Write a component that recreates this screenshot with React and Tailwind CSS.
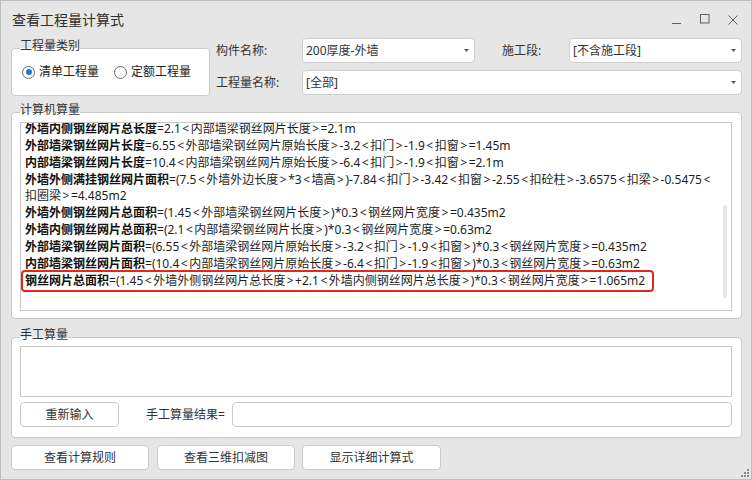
import React from "react";

const F = "font-['Noto_Sans','Noto_Sans_CJK_SC',sans-serif]";

function Legend({ children }) {
  return (
    <span className="absolute left-[8px] top-[-11px] leading-[16px] text-[12px] text-[#333] bg-[linear-gradient(to_bottom,#e6e6e6_10px,#ffffff_10px)] whitespace-nowrap">
      {children}
    </span>
  );
}

function Arrow() {
  return (
    <svg width="5" height="3" viewBox="0 0 5 3" className="shrink-0">
      <path d="M0 0H5L2.5 3Z" fill="#5a5a5a" />
    </svg>
  );
}

function Combo({ className, children }) {
  return (
    <div
      className={`h-[25px] bg-white border border-[#cdcdcd] rounded-[4px] flex items-center pl-[3px] pr-[5px] text-[12px] text-[#333] ${className}`}
    >
      <span className="flex-1 whitespace-nowrap">{children}</span>
      <Arrow />
    </div>
  );
}

function Radio({ checked, label }) {
  return (
    <div className="flex items-center gap-[4px]">
      <span className="w-[13px] h-[13px] rounded-full border border-[#6e6e6e] bg-white flex items-center justify-center">
        {checked && <span className="w-[6px] h-[6px] rounded-full bg-[#1f74e0]" />}
      </span>
      <span className="text-[12px] text-[#222] leading-[16px]">{label}</span>
    </div>
  );
}

function Btn({ className, children }) {
  return (
    <div
      className={`h-[25px] bg-white border border-[#cbcbcb] rounded-[4px] flex items-center justify-center text-[12px] text-[#333] ${className}`}
    >
      {children}
    </div>
  );
}

function T({ s }) {
  const parts = s.split(/([<>])/);
  return parts.map((p, i) =>
    p === "<" || p === ">" ? (
      <span key={i} className="px-[1.5px]">
        {p}
      </span>
    ) : (
      <React.Fragment key={i}>{p}</React.Fragment>
    )
  );
}

function L({ b, s }) {
  return (
    <div className="whitespace-nowrap">
      {b && <span className="font-bold text-[#111]">{b}</span>}
      <T s={s} />
    </div>
  );
}

export default function App() {
  return (
    <div
      className={`relative w-[752px] h-[480px] bg-[#e6e6e6] border border-[#bcbcbc] flex flex-col overflow-hidden ${F}`}
    >
      {/* title bar */}
      <div className="h-[37px] shrink-0 flex items-center pl-[11px] pr-[13px]">
        <span className="text-[14px] text-[#2f2f2f] leading-[18px]">查看工程量计算式</span>
        <div className="ml-auto flex items-center gap-[18px]">
          <svg width="10" height="10" viewBox="0 0 10 10">
            <path d="M0 8.5H9" stroke="#5f5f5f" strokeWidth="1" />
          </svg>
          <svg width="10" height="10" viewBox="0 0 10 10" className="-mt-[2px]">
            <rect x="0.5" y="0.5" width="8.5" height="8.5" fill="none" stroke="#5f5f5f" strokeWidth="1" />
          </svg>
          <svg width="10" height="10" viewBox="0 0 10 10">
            <path d="M0.5 0.5L9.5 9.5M9.5 0.5L0.5 9.5" stroke="#5f5f5f" strokeWidth="1" />
          </svg>
        </div>
      </div>

      {/* top row */}
      <div className="h-[58px] shrink-0 flex">
        <div className="relative ml-[10px] mt-[10px] w-[199px] h-[48px] bg-white border border-[#cacaca] rounded-[4px] flex items-center pl-[10px] gap-[15px]">
          <Legend>工程量类别</Legend>
          <Radio checked label="清单工程量" />
          <Radio label="定额工程量" />
        </div>
        <div className="ml-[6px] flex flex-col gap-[7px]">
          <div className="flex items-center h-[25px] text-[12px] text-[#333]">
            <span className="w-[86px]">构件名称:</span>
            <Combo className="w-[173px]">200厚度-外墙</Combo>
            <span className="ml-[27px] w-[67px]">施工段:</span>
            <Combo className="w-[173px]">[不含施工段]</Combo>
          </div>
          <div className="flex items-center h-[25px] text-[12px] text-[#333]">
            <span className="w-[86px]">工程量名称:</span>
            <Combo className="w-[440px]">[全部]</Combo>
          </div>
        </div>
      </div>

      {/* computer calculation */}
      <div className="relative shrink-0 ml-[10px] mt-[16px] w-[731px] h-[207px] bg-white border border-[#cacaca] rounded-[4px] pt-[9px] pl-[8px]">
        <Legend>计算机算量</Legend>
        <div className="relative w-[712px] h-[189px] border border-[#c8c8c8] overflow-hidden">
          <div className="-mt-[2px] pl-[4px] text-[12px] leading-[16.85px] text-[#1e1e1e]">
            <L b="外墙内侧钢丝网片总长度" s="=2.1<内部墙梁钢丝网片长度>=2.1m" />
            <L b="外部墙梁钢丝网片长度" s="=6.55<外部墙梁钢丝网片原始长度>-3.2<扣门>-1.9<扣窗>=1.45m" />
            <L b="内部墙梁钢丝网片长度" s="=10.4<内部墙梁钢丝网片原始长度>-6.4<扣门>-1.9<扣窗>=2.1m" />
            <L
              b="外墙外侧满挂钢丝网片面积"
              s="=(7.5<外墙外边长度>*3<墙高>)-7.84<扣门>-3.42<扣窗>-2.55<扣砼柱>-3.6575<扣梁>-0.5475<"
            />
            <L s="扣圈梁>=4.485m2" />
            <L b="外墙外侧钢丝网片总面积" s="=(1.45<外部墙梁钢丝网片长度>)*0.3<钢丝网片宽度>=0.435m2" />
            <L b="外墙内侧钢丝网片总面积" s="=(2.1<内部墙梁钢丝网片长度>)*0.3<钢丝网片宽度>=0.63m2" />
            <L
              b="外部墙梁钢丝网片面积"
              s="=(6.55<外部墙梁钢丝网片原始长度>-3.2<扣门>-1.9<扣窗>)*0.3<钢丝网片宽度>=0.435m2"
            />
            <L
              b="内部墙梁钢丝网片面积"
              s="=(10.4<内部墙梁钢丝网片原始长度>-6.4<扣门>-1.9<扣窗>)*0.3<钢丝网片宽度>=0.63m2"
            />
            <div className="whitespace-nowrap">
              <span className="relative inline-block">
                <span className="font-bold text-[#111]">钢丝网片总面积</span>
                <T s="=(1.45<外墙外侧钢丝网片总长度>+2.1<外墙内侧钢丝网片总长度>)*0.3<钢丝网片宽度>=1.065m2" />
                <span className="absolute left-[-4px] right-[-9px] top-[-3px] bottom-[-3px] border-2 border-[#e5261e] rounded-[4px]" />
              </span>
            </div>
          </div>
          <div className="absolute right-[4px] top-[82px] w-[4px] h-[93px] rounded-full bg-[#e6e6e6]" />
        </div>
      </div>

      {/* manual calculation */}
      <div className="relative shrink-0 ml-[10px] mt-[18px] w-[731px] h-[101px] bg-white border border-[#cacaca] rounded-[4px] pt-[8px] pl-[8px]">
        <Legend>手工算量</Legend>
        <div className="w-[712px] h-[51px] border border-[#c8c8c8]" />
        <div className="mt-[5px] flex items-center">
          <Btn className="w-[99px]">重新输入</Btn>
          <span className="ml-[27px] w-[86px] text-[12px] text-[#333]">手工算量结果=</span>
          <div className="w-[500px] h-[25px] border border-[#cbcbcb] rounded-[4px] bg-white" />
        </div>
      </div>

      {/* bottom buttons */}
      <div className="shrink-0 ml-[10px] mt-[7px] flex">
        <Btn className="w-[138px]">查看计算规则</Btn>
        <Btn className="ml-[8px] w-[138px]">查看三维扣减图</Btn>
        <Btn className="ml-[7px] w-[139px]">显示详细计算式</Btn>
      </div>

      {/* resize grip */}
      <svg className="absolute right-[2px] bottom-[2px]" width="9" height="9" viewBox="0 0 9 9">
        <rect x="7" y="1" width="2" height="2" fill="#8a8a8a" />
        <rect x="4" y="4" width="2" height="2" fill="#8a8a8a" />
        <rect x="7" y="4" width="2" height="2" fill="#8a8a8a" />
        <rect x="1" y="7" width="2" height="2" fill="#8a8a8a" />
        <rect x="4" y="7" width="2" height="2" fill="#8a8a8a" />
        <rect x="7" y="7" width="2" height="2" fill="#8a8a8a" />
      </svg>
    </div>
  );
}
